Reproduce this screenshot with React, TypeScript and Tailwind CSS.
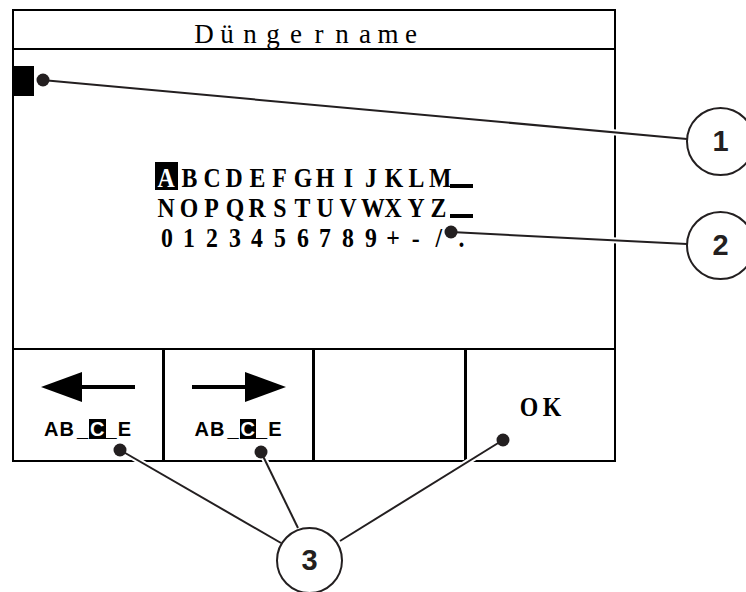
import React from "react";

const serif = { fontFamily: '"Liberation Serif", "Times New Roman", serif' };
const sans = { fontFamily: '"Liberation Sans", Arial, sans-serif' };

const rows = ["ABCDEFGHIJKLM_", "NOPQRSTUVWXYZ_", "0123456789+-/."];

function Cell({ c, hi }: { c: string; hi?: boolean }) {
  if (c === "_") {
    return (
      <span className="relative w-[22.7px] h-[30px]">
        <span className="absolute left-0 right-0 top-[21px] h-[4px] bg-black" />
      </span>
    );
  }
  return (
    <span className="relative w-[22.7px] text-center">
      {hi && <span className="absolute left-0 right-0 top-[-1px] h-[28px] bg-black" />}
      <span className={hi ? "relative inline-block scale-x-[0.85] text-white" : "relative inline-block scale-x-[0.85]"}>{c}</span>
    </span>
  );
}

function KeyRow({ text, hi }: { text: string; hi?: number }) {
  return (
    <div className="flex h-[30px] leading-[30px]">
      {text.split("").map((c, i) => (
        <Cell key={i} c={c} hi={i === hi} />
      ))}
    </div>
  );
}

function Label() {
  return (
    <div className="flex items-end text-[20px] leading-[20px] font-bold text-black tracking-[1px]" style={sans}>
      <span>AB</span>
      <span className="ml-[2px]">_</span>
      <span className="bg-black text-white px-[1px] tracking-normal">C</span>
      <span>_</span>
      <span>E</span>
    </div>
  );
}

function Arrow({ dir }: { dir: "left" | "right" }) {
  return (
    <svg width="94" height="30" viewBox="0 0 94 30">
      {dir === "left" ? (
        <g fill="black">
          <polygon points="0,15 41,0 41,30" />
          <rect x="40" y="13" width="54" height="4" />
        </g>
      ) : (
        <g fill="black">
          <polygon points="94,15 53,0 53,30" />
          <rect x="0" y="13" width="54" height="4" />
        </g>
      )}
    </svg>
  );
}

function Callout({ n, left, top, size }: { n: string; left: number; top: number; size: number }) {
  return (
    <div
      className="absolute rounded-full border-2 border-[#231f20] bg-white flex items-center justify-center text-[29px] font-bold text-[#231f20]"
      style={{ left, top, width: size, height: size, ...sans }}
    >
      {n}
    </div>
  );
}

const lines: [number, number, number, number][] = [
  [42, 80, 687, 139],
  [451, 232, 687, 244],
  [120, 450, 281, 543],
  [261, 452, 298, 528],
  [503, 440, 340, 541],
];
const dots: [number, number][] = [
  [43, 80],
  [451, 232],
  [120, 450],
  [261, 452],
  [503, 440],
];

export default function App() {
  return (
    <div className="relative w-[746px] h-[592px] bg-white overflow-hidden pt-[9px] pl-[12px] text-black">
      <div className="w-[604px] h-[453px] border-2 border-black flex flex-col">
        <div className="h-[39px] border-b-2 border-black flex justify-center pr-[13px] pt-[8px]" style={serif}>
          <div className="flex h-[30px] leading-[30px] text-[27px]">
            {"Düngername".split("").map((c, i) => (
              <span key={i} className="w-[23px] text-center">{c}</span>
            ))}
          </div>
        </div>
        <div className="flex-1 flex flex-col">
          <div className="-ml-[2px] mt-[16px] w-[22px] h-[30px] bg-black" />
          <div className="mt-[67px] flex flex-col items-center text-[28px] font-bold" style={serif}>
            <KeyRow text={rows[0]} hi={0} />
            <KeyRow text={rows[1]} />
            <KeyRow text={rows[2]} />
          </div>
        </div>
        <div className="h-[112px] border-t-2 border-black flex">
          <div className="w-[148px] flex flex-col items-center pt-[22px]">
            <Arrow dir="left" />
            <div className="mt-[17px]"><Label /></div>
          </div>
          <div className="w-[150px] border-l-[3px] border-black flex flex-col items-center pt-[22px]">
            <Arrow dir="right" />
            <div className="mt-[17px]"><Label /></div>
          </div>
          <div className="w-[152px] border-l-[3px] border-black" />
          <div className="flex-1 border-l-[3px] border-black flex justify-center pt-[42px]" style={serif}>
            <div className="flex h-[30px] leading-[30px] text-[28px] font-bold">
              <span className="w-[23px] text-center"><span className="inline-block scale-x-[0.85]">O</span></span>
              <span className="w-[23px] text-center"><span className="inline-block scale-x-[0.85]">K</span></span>
            </div>
          </div>
        </div>
      </div>

      <svg className="absolute inset-0 pointer-events-none" width="746" height="592">
        {lines.map(([x1, y1, x2, y2], i) => (
          <line key={"h" + i} x1={x1} y1={y1} x2={x2} y2={y2} stroke="white" strokeWidth="6" />
        ))}
        {lines.map(([x1, y1, x2, y2], i) => (
          <line key={"l" + i} x1={x1} y1={y1} x2={x2} y2={y2} stroke="#231f20" strokeWidth="2" />
        ))}
        {dots.map(([x, y], i) => (
          <circle key={"d" + i} cx={x} cy={y} r="6.5" fill="#231f20" />
        ))}
      </svg>

      <Callout n="1" left={686} top={107} size={69} />
      <Callout n="2" left={686} top={211} size={69} />
      <Callout n="3" left={276} top={527} size={67} />
    </div>
  );
}
